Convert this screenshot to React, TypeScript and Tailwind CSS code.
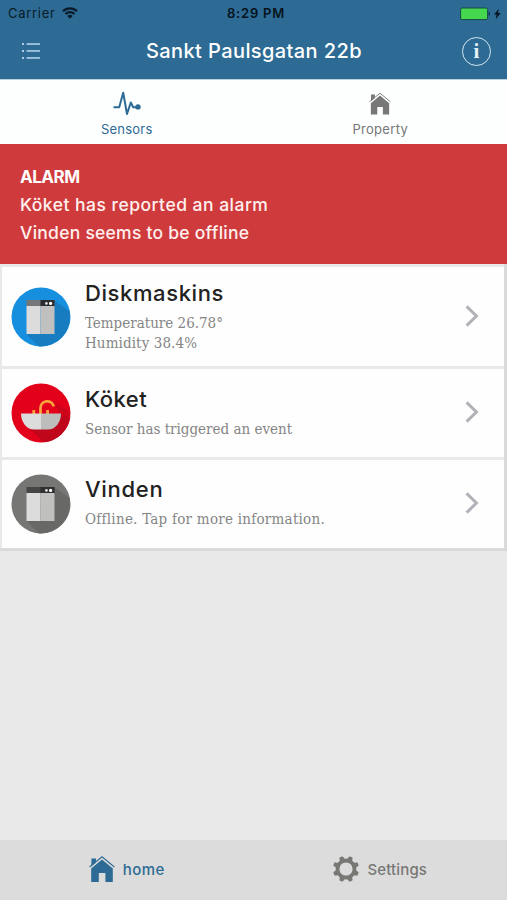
import React from "react";

type IconProps = { className?: string };

const WifiIcon: React.FC<IconProps> = ({ className }) => (
  <svg className={className} viewBox="0 0 16 12" fill="none" stroke="currentColor">
    <path d="M1 4.2a10 10 0 0 1 14 0" strokeWidth="2.1" />
    <path d="M3.4 7a6.6 6.6 0 0 1 9.2 0" strokeWidth="2.1" />
    <path d="M8 11.8 5.3 9.1a3.9 3.9 0 0 1 5.4 0Z" fill="currentColor" stroke="none" />
  </svg>
);

const BatteryIcon: React.FC<IconProps> = ({ className }) => (
  <svg className={className} viewBox="0 0 42 14">
    <rect x="0.6" y="1" width="27" height="11.6" rx="1.6" fill="#45d84f" stroke="#174a45" />
    <path d="M28.8 4.8c1.4.3 1.4 3.7 0 4Z" fill="#0c2233" />
    <path d="M39 1.8 34 7.6h2.7l-1 4.6 5-6.2h-2.8Z" fill="#06131d" />
  </svg>
);

const ListIcon: React.FC<IconProps> = ({ className }) => (
  <svg className={className} viewBox="0 0 18 16" fill="#a9cbe4">
    <rect x="0" y="0" width="2" height="2" />
    <rect x="0" y="7" width="2" height="2" />
    <rect x="0" y="14" width="2" height="2" />
    <rect x="4.5" y="0.2" width="13.5" height="1.7" />
    <rect x="4.5" y="7.1" width="13.5" height="1.7" />
    <rect x="4.5" y="14.1" width="13.5" height="1.7" />
  </svg>
);

const PulseIcon: React.FC<IconProps> = ({ className }) => (
  <svg className={className} viewBox="0 0 28 25" fill="none" stroke="currentColor">
    <path
      d="M0.5 16.3H6.2L10.2 1.8 14 23 17.8 11.5 20.2 16.3H24"
      strokeWidth="2"
      strokeLinejoin="round"
    />
    <circle cx="25" cy="15.9" r="2.7" fill="currentColor" stroke="none" />
  </svg>
);

const HouseIcon: React.FC<IconProps> = ({ className }) => (
  <svg className={className} viewBox="0 0 26 26" fill="currentColor">
    <path d="M2.4 2.4h4.6v4.2L2.4 10.2Z" />
    <path d="M13 3.6 23.8 12.6V26H16.4V17H9.8v9H2.2V12.6Z" />
    <path d="M.6 11 13 .8l12.4 10.2" fill="none" stroke="currentColor" strokeWidth="1.1" />
  </svg>
);

const GearIcon: React.FC<IconProps> = ({ className }) => (
  <svg className={className} viewBox="-13 -13 26 26" fill="currentColor">
    {[22.5, 67.5, 112.5, 157.5, 202.5, 247.5, 292.5, 337.5].map((angle) => (
      <path
        key={angle}
        d="M-4-8.6C-2.4-9.4-2.3-10.4-2.1-12.2Q-1.9-13.1-1-13.1H1Q1.9-13.1 2.1-12.2C2.3-10.4 2.4-9.4 4-8.6Z"
        transform={`rotate(${angle})`}
      />
    ))}
    <circle r="8.5" fill="none" stroke="currentColor" strokeWidth="3.8" />
  </svg>
);

const ChevronIcon: React.FC<IconProps> = ({ className }) => (
  <svg className={className} viewBox="0 0 14 22" fill="none" stroke="#b0b2b8" strokeWidth="3">
    <path d="M1.6 1.4 11.4 11 1.6 20.6" />
  </svg>
);

type WasherProps = { circle: string; shadow: string; topLeft: string; topRight: string };

const WasherIcon: React.FC<WasherProps> = ({ circle, shadow, topLeft, topRight }) => (
  <svg className="size-[60px] shrink-0" viewBox="0 0 60 60">
    <circle cx="30" cy="30" r="29.5" fill={circle} />
    <path d="M43.5 13.5 58.4 24A29.5 29.5 0 0 1 28 59.4L15.5 47Z" fill={shadow} />
    <rect x="15.5" y="13" width="28" height="7" fill={topLeft} />
    <rect x="29.5" y="13" width="14" height="7" fill={topRight} />
    <rect x="15.5" y="19" width="14" height="28" fill="#dcdcdc" />
    <rect x="29.5" y="19" width="14" height="28" fill="#c0c0be" />
    <circle cx="35.4" cy="16.4" r="1.4" fill="#ddd" />
    <circle cx="39.6" cy="16.4" r="1.6" fill="#fff" />
  </svg>
);

const SinkIcon: React.FC = () => (
  <svg className="size-[60px] shrink-0" viewBox="0 0 60 60">
    <circle cx="30" cy="30" r="29.5" fill="#e2001a" />
    <path d="M50 31 59.3 34A29.5 29.5 0 0 1 33 59.3L17 44Z" fill="#c0061b" />
    <path d="M43 19 59 29v6L49 32Z" fill="#cd041b" />
    <path
      d="M29.5 31V25.2a6.7 6.7 0 0 1 13.2-1.8M22.8 31v-4M36.6 31v-4"
      fill="none"
      stroke="#f9a33c"
      strokeWidth="2.8"
    />
    <path d="M10 30.5H30V46.5H23C15 46.5 10 38.5 10 30.5Z" fill="#dcdcdc" />
    <path d="M50 30.5H30V46.5H37C45 46.5 50 38.5 50 30.5Z" fill="#bdbdbb" />
  </svg>
);

type SensorRowProps = {
  icon: React.ReactNode;
  title: React.ReactNode;
  children: React.ReactNode;
  className: string;
};

const SensorRow: React.FC<SensorRowProps> = ({ icon, title, children, className }) => (
  <li className={`flex items-center bg-[#fefefe] pl-[9px] pr-[25px] ${className}`}>
    {icon}
    <div className="ml-[14px] grow self-start whitespace-nowrap">
      {title}
      <div className="mt-[4px] font-['DejaVu_Serif_Condensed','DejaVu_Serif',serif] text-[15px] leading-5 text-[#858585]">
        {children}
      </div>
    </div>
    <ChevronIcon className="mb-[2px] h-[22px] w-[14px]" />
  </li>
);

const App: React.FC = () => {
  return (
    <div className="flex h-[900px] w-[507px] flex-col overflow-hidden bg-[#e9e9e9] font-['Inter',sans-serif]">
      <header className="h-[79px] bg-[#2d6b94]">
        <div className="grid h-[27px] grid-cols-3 items-center pl-[8px] pr-[5px] text-[13px] text-[#0a1c29]">
          <div className="flex items-center gap-[6px]">
            <span className="tracking-[0.7px]">Carrier</span>
            <WifiIcon className="mb-[2px] h-[12px] w-[16px]" />
          </div>
          <span className="pl-[2px] text-center font-semibold tracking-[0.8px] text-[#06131d]">
            8:29 PM
          </span>
          <BatteryIcon className="h-[14px] w-[42px] justify-self-end" />
        </div>
        <div className="flex h-[48px] items-center justify-between pl-[22px] pr-[16px]">
          <ListIcon className="h-[16px] w-[18px]" />
          <h1 className="ml-[6px] text-[20px] font-medium tracking-[0.4px] text-white">
            Sankt Paulsgatan 22b
          </h1>
          <div className="flex size-[29px] items-center justify-center rounded-full border-[1.5px] border-[#d3e6f3] font-['Liberation_Serif',serif] text-[21px] font-bold leading-none text-[#e6f2fa]">
            i
          </div>
        </div>
      </header>
      <nav className="grid h-[65px] grid-cols-2 border-t border-[#bccfdc] bg-[#fdfefe] text-[13px]">
        <div className="flex flex-col items-center pt-[11px] text-[#2d6b94]">
          <PulseIcon className="h-[25px] w-[28px]" />
          <span className="mt-[4px] leading-[18px] tracking-[0.2px]">Sensors</span>
        </div>
        <div className="flex flex-col items-center pt-[12px] text-[#777]">
          <HouseIcon className="h-[23px] w-[22px]" />
          <span className="mt-[5px] leading-[18px] tracking-[0.3px]">Property</span>
        </div>
      </nav>
      <section className="h-[120px] bg-[#cf3b3d] pl-[20px] pt-[19px] text-[17.5px] font-medium leading-7 text-[#fff0ee]">
        <h2 className="text-[17px] font-bold text-white">
          <span className="tracking-[-0.5px]">ALARM</span>
        </h2>
        <p>
          <span className="tracking-[0.48px]">Köket has reported an alarm</span>
        </p>
        <p>
          <span className="tracking-[0.25px]">Vinden seems to be offline</span>
        </p>
      </section>
      <ul className="flex flex-col gap-[3px] border-b-[3px] border-r-[3px] border-[#d8dadb] pl-[2px] pt-[3px]">
        <SensorRow
          className="h-[99px]"
          icon={<WasherIcon circle="#178fdf" shadow="#177cc0" topLeft="#757779" topRight="#2b2d2f" />}
          title={
            <h3 className="mt-[10px] text-[22px] font-medium leading-8 text-[#222]">
              <span className="tracking-[0.6px]">Diskmaskins</span>
            </h3>
          }
        >
          <p>
            <span>Temperature 26.78°</span>
          </p>
          <p>
            <span className="tracking-[0.1px]">Humidity 38.4%</span>
          </p>
        </SensorRow>
        <SensorRow
          className="h-[88px]"
          icon={<SinkIcon />}
          title={
            <h3 className="mt-[14px] text-[22px] font-medium leading-8 text-[#222]">
              <span className="tracking-[0.5px]">Köket</span>
            </h3>
          }
        >
          <p>
            <span>Sensor has triggered an event</span>
          </p>
        </SensorRow>
        <SensorRow
          className="h-[88px]"
          icon={<WasherIcon circle="#767674" shadow="#686866" topLeft="#454545" topRight="#303030" />}
          title={
            <h3 className="mt-[13px] text-[22px] font-medium leading-8 text-[#222]">
              <span className="tracking-[0.7px]">Vinden</span>
            </h3>
          }
        >
          <p>
            <span className="tracking-[0.25px]">Offline. Tap for more information.</span>
          </p>
        </SensorRow>
      </ul>
      <footer className="mt-auto grid h-[60px] grid-cols-2 bg-[#dcdcdc] text-[15px] font-medium">
        <div className="flex items-center justify-center gap-[8px] text-[#2d6b94]">
          <HouseIcon className="mb-[2px] size-[26px]" />
          <span className="tracking-[0.4px]">home</span>
        </div>
        <div className="flex items-center justify-center gap-[8px] text-[#777774]">
          <GearIcon className="mb-[2px] size-[26px]" />
          <span className="tracking-[0.15px]">Settings</span>
        </div>
      </footer>
    </div>
  );
};

export default App;
